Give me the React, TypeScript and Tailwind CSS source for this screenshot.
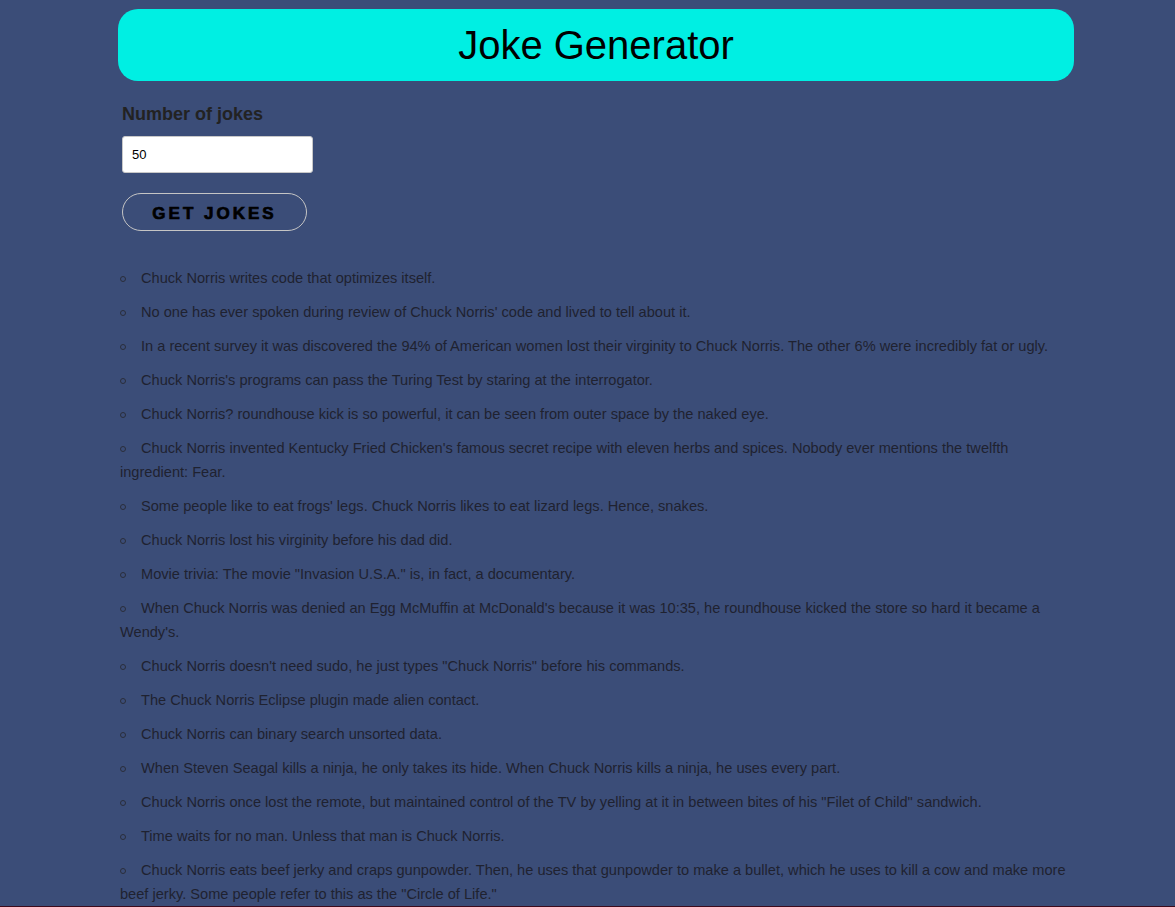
import { useState } from "react";

const JOKES = [
	"Chuck Norris writes code that optimizes itself.",
	"No one has ever spoken during review of Chuck Norris' code and lived to tell about it.",
	"In a recent survey it was discovered the 94% of American women lost their virginity to Chuck Norris. The other 6% were incredibly fat or ugly.",
	"Chuck Norris's programs can pass the Turing Test by staring at the interrogator.",
	"Chuck Norris? roundhouse kick is so powerful, it can be seen from outer space by the naked eye.",
	"Chuck Norris invented Kentucky Fried Chicken's famous secret recipe with eleven herbs and spices. Nobody ever mentions the twelfth ingredient: Fear.",
	"Some people like to eat frogs' legs. Chuck Norris likes to eat lizard legs. Hence, snakes.",
	"Chuck Norris lost his virginity before his dad did.",
	"Movie trivia: The movie \"Invasion U.S.A.\" is, in fact, a documentary.",
	"When Chuck Norris was denied an Egg McMuffin at McDonald's because it was 10:35, he roundhouse kicked the store so hard it became a Wendy's.",
	"Chuck Norris doesn't need sudo, he just types \"Chuck Norris\" before his commands.",
	"The Chuck Norris Eclipse plugin made alien contact.",
	"Chuck Norris can binary search unsorted data.",
	"When Steven Seagal kills a ninja, he only takes its hide. When Chuck Norris kills a ninja, he uses every part.",
	"Chuck Norris once lost the remote, but maintained control of the TV by yelling at it in between bites of his \"Filet of Child\" sandwich.",
	"Time waits for no man. Unless that man is Chuck Norris.",
	"Chuck Norris eats beef jerky and craps gunpowder. Then, he uses that gunpowder to make a bullet, which he uses to kill a cow and make more beef jerky. Some people refer to this as the \"Circle of Life.\"",
];

export default function App() {
	const [count, setCount] = useState("50")

	return (
		<div className="min-h-screen bg-[#3b4d78] font-['Liberation_Sans',Arial,sans-serif] pt-[9px] border-b border-[#3d0b1c]">
			<div className="ml-[118px] w-[956px] h-[72px] bg-[#00efe3] rounded-[20px] flex items-center justify-center">
				<h1 className="text-[40px] leading-none text-black">Joke Generator</h1>
			</div>

			<div className="ml-[122px] mt-[23px] flex flex-col items-start">
				<label className="text-[18px] leading-[21px] font-bold text-[#222]">Number of jokes</label>
				<input
					type="number"
					value={count}
					onChange={(e) => setCount(e.target.value)}
					className="mt-[11px] w-[191px] h-[37px] bg-white border border-[#c8c8c8] rounded-[3px] pl-[9px] text-[13px] text-black outline-none"
				/>
				<button className="mt-[20px] w-[185px] h-[38px] pt-[3px] rounded-full border border-[#c5c5c5] text-[17px] font-black tracking-[3px] text-black [-webkit-text-stroke:0.7px_black]">
					GET JOKES
				</button>
			</div>

			<ul className="ml-[120px] w-[954px] mt-[35px] text-[14.6px] leading-[24px] text-[#1f2230]">
				{JOKES.map((joke, i) => (
					<li key={i} className="mb-[10px] last:mb-0">
						<span className="inline-block w-[6px] h-[6px] rounded-full border-[1.5px] border-[#2a2d3a] mr-[15px] align-[1px]"></span>
						{joke}
					</li>
				))}
			</ul>
		</div>
	)
}
